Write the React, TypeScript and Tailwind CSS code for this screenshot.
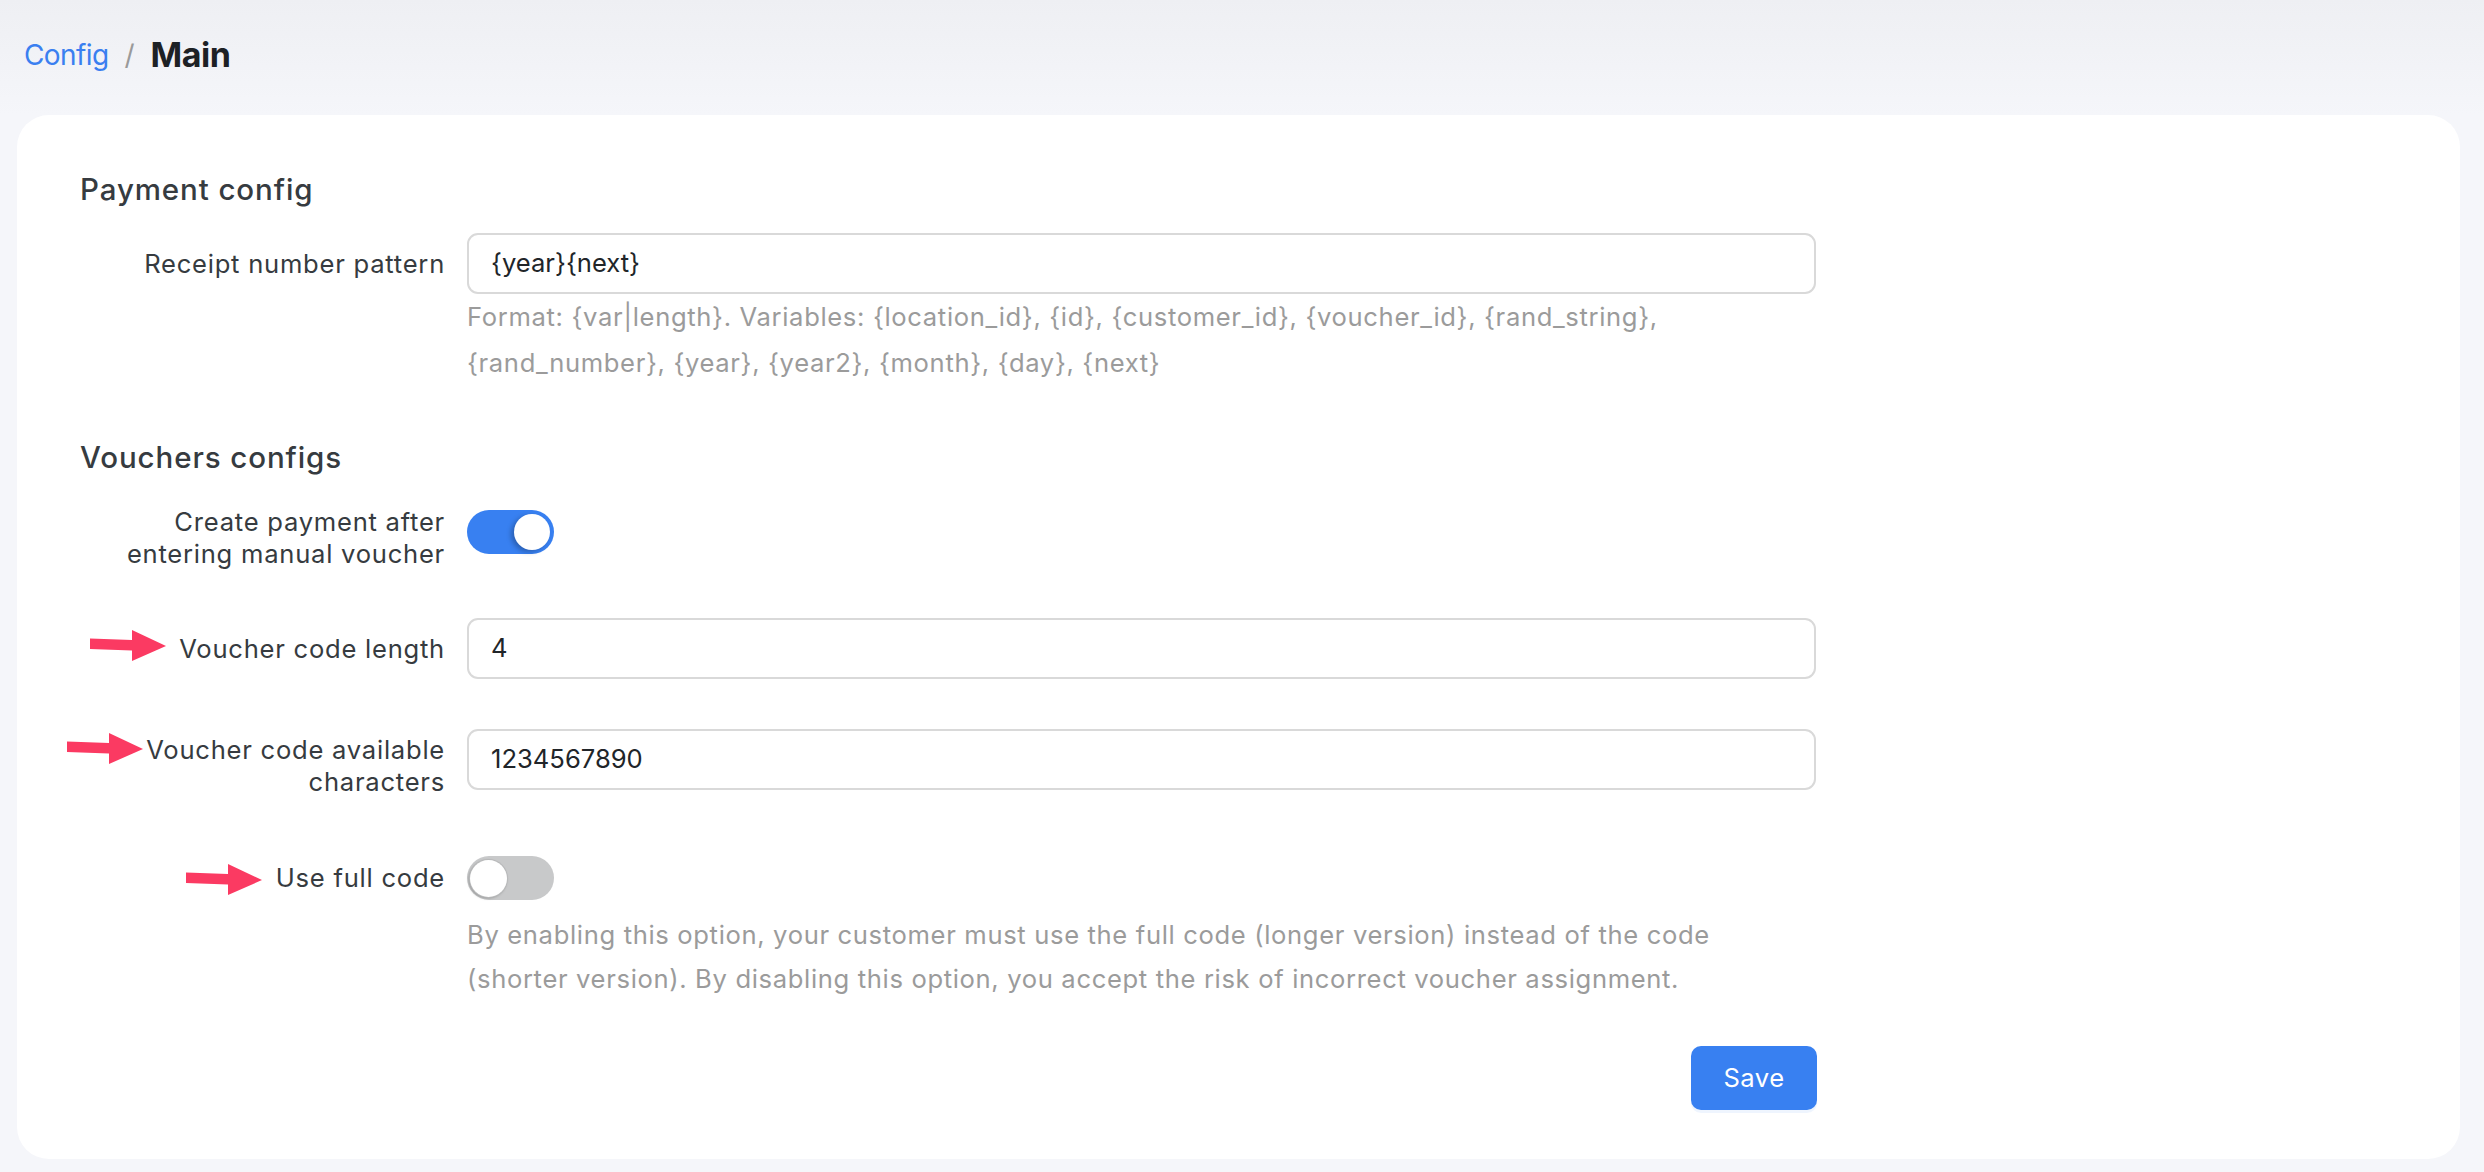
import React from "react";

function Arrow() {
  return (
    <svg width="76" height="31" viewBox="0 0 76 31" className="shrink-0">
      <polygon points="0,8.5 42,10 42,0 76,16 42,31 42,20.5 0,19" fill="#fb3a62" />
    </svg>
  );
}

function Toggle({ on }: { on: boolean }) {
  return (
    <div
      className={
        on
          ? "relative h-[44px] w-[87px] shrink-0 rounded-full bg-[#3880f1]"
          : "relative h-[44px] w-[87px] shrink-0 rounded-full bg-[#c8c9ca]"
      }
    >
      <div
        className={
          on
            ? "absolute right-[4px] top-[4px] h-[36px] w-[36px] rounded-full bg-white shadow-[-3px_2px_5px_rgba(0,0,0,0.25)]"
            : "absolute left-[3px] top-[4px] h-[37px] w-[37px] rounded-full bg-white shadow-[-1px_1px_3px_rgba(0,0,0,0.35)] ring-1 ring-[#b8b9ba]"
        }
      />
    </div>
  );
}

function TextInput({ value }: { value: string }) {
  return (
    <div className="flex h-[61px] w-[1349px] shrink-0 items-center rounded-[11px] border-2 border-[#d9d9d9] bg-white pl-[22px] text-[25.6px] text-[#212529]">
      {value}
    </div>
  );
}

export default function App() {
  return (
    <div
      className="min-h-[1172px] w-full bg-[#f5f6fa]"
      style={{ fontFamily: "Inter, 'Noto Sans', sans-serif" }}
    >
      <div className="flex h-[115px] items-center gap-[16px] bg-gradient-to-b from-[#eeeff3] to-[#f5f6fa] pb-[6px] pl-[24px]">
        <span className="text-[28px] tracking-[-0.6px] text-[#3a7ff0]">Config</span>
        <span className="text-[28px] text-[#9a9a9a]">/</span>
        <span className="text-[34px] font-bold tracking-[-0.5px] text-[#1d2125]">Main</span>
      </div>

      <div className="mb-[14px] ml-[17px] mr-[24px] rounded-[32px] bg-white pb-[49px] pl-[63px] pt-[57px] text-[#363b40]">
        <div className="h-[34px] whitespace-nowrap text-[29.5px] font-medium leading-[34px] tracking-[0.9px]">
          Payment config
        </div>

        <div className="mt-[27px] flex items-center gap-[22px]">
          <div className="w-[365px] shrink-0 whitespace-nowrap text-right text-[25.6px] leading-[32px] tracking-[0.75px]">
            Receipt number pattern
          </div>
          <TextInput value="{year}{next}" />
        </div>
        <div className="ml-[387px] mt-[0px] whitespace-nowrap text-[25.6px] leading-[46px] tracking-[0.65px] text-[#9b9b9b]">
          Format: {"{var|length}"}. Variables: {"{location_id}"}, {"{id}"}, {"{customer_id}"}, {"{voucher_id}"}, {"{rand_string}"},
          <br />
          {"{rand_number}"}, {"{year}"}, {"{year2}"}, {"{month}"}, {"{day}"}, {"{next}"}
        </div>

        <div className="mt-[54px] h-[34px] whitespace-nowrap text-[29.5px] font-medium leading-[34px] tracking-[0.9px]">
          Vouchers configs
        </div>

        <div className="mt-[32px] flex items-start gap-[22px]">
          <div className="w-[365px] shrink-0 whitespace-nowrap text-right text-[25.6px] leading-[32px] tracking-[0.75px]">
            Create payment after
            <br />
            entering manual voucher
          </div>
          <div className="mt-[4px]">
            <Toggle on={true} />
          </div>
        </div>

        <div className="mt-[48px] flex items-center gap-[22px]">
          <div className="flex w-[365px] shrink-0 items-center justify-end gap-[13px] whitespace-nowrap text-[25.6px] leading-[32px] tracking-[0.75px]">
            <div className="mt-[-6px] shrink-0">
              <Arrow />
            </div>
            <span className="shrink-0">Voucher code length</span>
          </div>
          <TextInput value="4" />
        </div>

        <div className="mt-[50px] flex items-start gap-[22px]">
          <div className="mt-[5px] flex w-[365px] shrink-0 items-start justify-end gap-[3px] whitespace-nowrap text-[25.6px] leading-[32px] tracking-[0.75px]">
            <div className="mt-[-1px] shrink-0">
              <Arrow />
            </div>
            <div className="shrink-0 text-right">
              Voucher code available
              <br />
              characters
            </div>
          </div>
          <TextInput value="1234567890" />
        </div>

        <div className="mt-[58px] flex items-center gap-[22px]">
          <div className="flex w-[365px] shrink-0 items-center justify-end gap-[14px] whitespace-nowrap text-[25.6px] leading-[32px] tracking-[0.75px]">
            <div className="mt-[3px] shrink-0">
              <Arrow />
            </div>
            <span className="shrink-0">Use full code</span>
          </div>
          <Toggle on={false} />
        </div>
        <div className="ml-[387px] mt-[13px] whitespace-nowrap text-[25.6px] leading-[44px] tracking-[0.65px] text-[#9b9b9b]">
          By enabling this option, your customer must use the full code (longer version) instead of the code
          <br />
          (shorter version). By disabling this option, you accept the risk of incorrect voucher assignment.
        </div>

        <div className="mt-[45px] flex w-[1737px] justify-end">
          <button className="h-[64px] w-[126px] rounded-[10px] bg-[#3880f1] text-[25.6px] tracking-[0.5px] text-white shadow-[0_3px_0_rgba(56,128,241,0.08)]">
            Save
          </button>
        </div>
      </div>
    </div>
  );
}
